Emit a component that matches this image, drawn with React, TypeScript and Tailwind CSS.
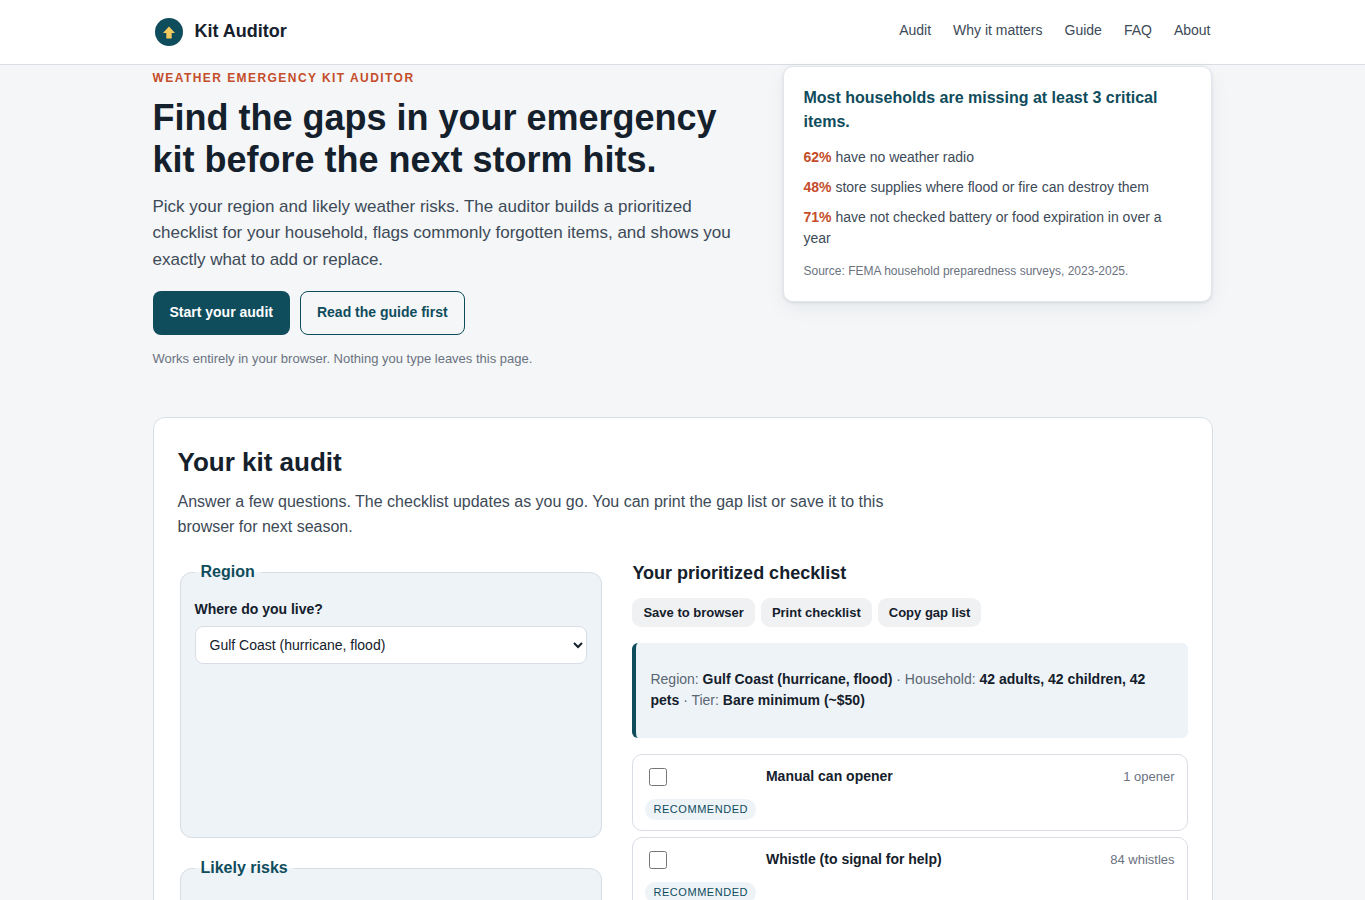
const navLinks = ['Audit', 'Why it matters', 'Guide', 'FAQ', 'About'];

const stats = [
  { pct: '62%', text: 'have no weather radio' },
  { pct: '48%', text: 'store supplies where flood or fire can destroy them' },
  { pct: '71%', text: 'have not checked battery or food expiration in over a year' },
];

const items = [
  { name: 'Manual can opener', qty: '1 opener' },
  { name: 'Whistle (to signal for help)', qty: '84 whistles' },
];

const Header = () => (
  <header className="bg-white border-b border-[#d9dee4] h-[65px]">
    <div className="w-[1060px] mx-auto h-full flex items-center justify-between">
      <div className="flex items-center gap-[12px] pl-[2px]">
        <svg width="28" height="28" viewBox="0 0 28 28" aria-hidden="true">
          <circle cx="14" cy="14" r="14" fill="#0f4c5c" />
          <path d="M14 8.5 L20 15 H16.7 V20.5 H11.3 V15 H8 Z" fill="#f4c95d" />
        </svg>
        <span className="pb-[2px] text-[18px] font-bold text-[#14202b]">Kit Auditor</span>
      </div>
      <nav className="flex gap-[22px] pr-[2px] pb-[4px] text-[14px] text-[#3d4a57]">
        {navLinks.map((link) => (
          <a key={link} href="#">{link}</a>
        ))}
      </nav>
    </div>
  </header>
);

const Hero = () => (
  <section className="grid grid-cols-[582px_429.5px] justify-between items-start pr-[0.5px]">
    <div className="pt-[6px]">
      <p className="text-[12px] leading-[14px] font-bold tracking-[1.44px] text-[#c44d2a]">
        WEATHER EMERGENCY KIT AUDITOR
      </p>
      <h1 className="mt-[12px] text-[36px] leading-[42px] font-bold text-[#14202b]">
        Find the gaps in your emergency kit before the next storm hits.
      </h1>
      <p className="mt-[13px] text-[17px] leading-[26.35px] text-[#3d4a57]">
        Pick your region and likely weather risks. The auditor builds a prioritized checklist for your household, flags
        commonly forgotten items, and shows you exactly what to add or replace.
      </p>
      <div className="mt-[18px] flex gap-[10px]">
        <a href="#" className="h-[44px] px-[17px] pb-px flex items-center rounded-[8px] bg-[#0f4c5c] text-white text-[14px] font-bold">
          Start your audit
        </a>
        <a href="#" className="h-[44px] px-[16px] pb-px flex items-center rounded-[8px] border border-[#0f4c5c] text-[#0f4c5c] text-[14px] font-bold">
          Read the guide first
        </a>
      </div>
      <p className="mt-[15px] text-[13px] leading-[18px] text-[#6b7280]">
        Works entirely in your browser. Nothing you type leaves this page.
      </p>
    </div>
    <aside className="mt-px bg-white border border-[#e2e6eb] rounded-[10px] shadow-[0_1px_3px_rgba(20,32,43,0.1),0_6px_20px_rgba(20,32,43,0.06)] px-5 pt-[19px] pb-[21px]">
      <h2 className="text-[16px] leading-[24px] font-bold text-[#0f4c5c]">
        Most households are missing at least 3 critical items.
      </h2>
      <div className="mt-[13px]">
        {stats.map((s) => (
          <p key={s.pct} className="mt-[9px] text-[14px] leading-[21px] text-[#3d4a57]">
            <strong className="font-bold text-[#c44d2a]">{s.pct}</strong> {s.text}
          </p>
        ))}
      </div>
      <p className="mt-[13px] text-[12px] leading-[18px] text-[#6b7280]">
        Source: FEMA household preparedness surveys, 2023-2025.
      </p>
    </aside>
  </section>
);

const Fieldset = ({ legend, className, children }: { legend: string; className: string; children?: React.ReactNode }) => (
  <fieldset className={`mx-[2px] border border-[#d9dee4] rounded-[12px] bg-[#eef3f8] px-[14px] ${className}`}>
    <legend className="px-[6px] text-[16px] leading-[18px] font-bold text-[#0f4c5c]">{legend}</legend>
    {children}
  </fieldset>
);

const ChecklistItem = ({ name, qty }: { name: string; qty: string }) => (
  <li className="h-[77px] border border-[#d9dee4] rounded-[10px] bg-white px-[12px]">
    <div className="flex items-start pt-[13px]">
      <input type="checkbox" className="w-[18px] h-[18px] ml-[4px]" />
      <span className="ml-[98.5px] flex-1 text-[14px] leading-[17px] font-bold text-[#14202b]">{name}</span>
      <span className="text-[13px] leading-[17px] text-[#6b7280]">{qty}</span>
    </div>
    <span className="mt-[13px] inline-block rounded-full bg-[#eef3f8] px-[8px] text-[11px] leading-[21px] tracking-[0.55px] text-[#0f4c5c]">
      RECOMMENDED
    </span>
  </li>
);

const Audit = () => (
  <section className="mt-[49px] bg-white border border-[#d9dee4] rounded-[12px] px-6 pt-[26px]">
    <h2 className="text-[26px] leading-[36px] font-bold text-[#14202b]">Your kit audit</h2>
    <p className="mt-[9px] w-[740px] text-[16px] leading-[25px] text-[#3d4a57]">
      Answer a few questions. The checklist updates as you go. You can print the gap list or save it to this browser for
      next season.
    </p>
    <div className="mt-[23px] grid grid-cols-[1fr_1.3fr] gap-x-7 items-start">
      <div className="pt-px flex flex-col gap-[21px]">
        <Fieldset legend="Region" className="h-[275px]">
          <label className="block mt-[20px] text-[14px] leading-[17px] font-bold text-[#14202b]">Where do you live?</label>
          <select className="mt-[8px] block w-full h-[38px] pl-[10px] pr-[4px] bg-white border border-[#d9dee4] rounded-[8px] text-[14px] text-[#14202b]">
            <option>Gulf Coast (hurricane, flood)</option>
          </select>
        </Fieldset>
        <Fieldset legend="Likely risks" className="h-[120px]" />
      </div>
      <div>
        <h3 className="text-[18px] leading-[22px] font-bold text-[#14202b]">Your prioritized checklist</h3>
        <div className="mt-[14px] flex gap-[6px]">
          {['Save to browser', 'Print checklist', 'Copy gap list'].map((label) => (
            <button key={label} className="h-[29px] px-[11px] pt-px rounded-[9px] bg-[#f0f1f3] text-[13px] font-bold text-[#14202b]">
              {label}
            </button>
          ))}
        </div>
        <div className="mt-[16px] h-[95px] pb-[2px] flex items-center rounded-[6px] border-l-4 border-[#0f4c5c] bg-[#eef3f8] pl-[14px] pr-[30px] text-[14px] leading-[21px] text-[#5a6672]">
          <p>
            Region: <strong className="font-bold text-[#14202b]">Gulf Coast (hurricane, flood)</strong> · Household:{' '}
            <strong className="font-bold text-[#14202b]">42 adults, 42 children, 42 pets</strong> · Tier:{' '}
            <strong className="font-bold text-[#14202b]">Bare minimum (~$50)</strong>
          </p>
        </div>
        <ul className="mt-[16px] flex flex-col gap-[6px]">
          {items.map((item) => (
            <ChecklistItem key={item.name} {...item} />
          ))}
        </ul>
      </div>
    </div>
  </section>
);

export default function App() {
  return (
    <div className="min-h-screen bg-[#f4f6f8] font-['Liberation_Sans',Arial,sans-serif]">
      <Header />
      <main className="w-[1060px] mx-auto">
        <Hero />
        <Audit />
      </main>
    </div>
  );
}
